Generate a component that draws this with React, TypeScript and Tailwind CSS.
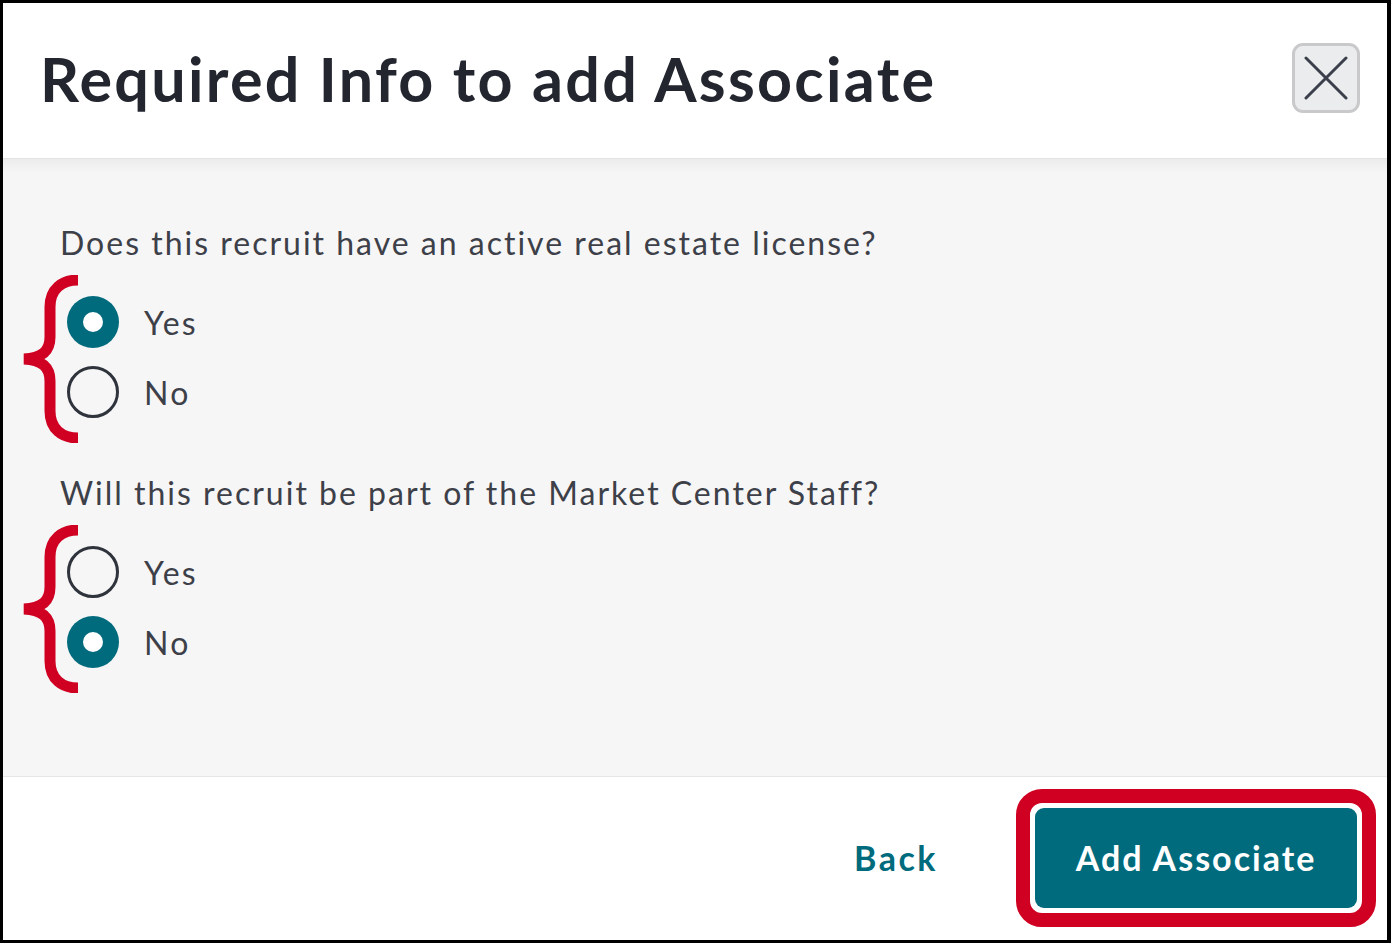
import React from "react";

const Brace = () => (
  <svg
    className="absolute left-[19px] top-[-21px]"
    width="60"
    height="168"
    viewBox="0 0 60 168"
    fill="none"
  >
    <path
      d="M56 5 C40 5 28 14 28 32 L28 62 C28 76 20 83 2 84 C20 85 28 92 28 106 L28 136 C28 154 40 163 56 163"
      stroke="#cf0022"
      strokeWidth="11"
    />
  </svg>
);

const Radio = ({ checked, label }: { checked: boolean; label: string }) => (
  <div className="flex items-center h-[52px]">
    {checked ? (
      <div className="w-[52px] h-[52px] rounded-full bg-[#006b7d] flex items-center justify-center">
        <div className="w-[20px] h-[20px] rounded-full bg-white" />
      </div>
    ) : (
      <div className="w-[52px] h-[52px] rounded-full border-[3px] border-[#2f333c] bg-transparent" />
    )}
    <span className="ml-[25px] mt-[2px] text-[32px] text-[#3d4048] leading-none tracking-[2.2px]">{label}</span>
  </div>
);

const Group = ({ yes }: { yes: boolean }) => (
  <div className="relative pl-[64px] flex flex-col gap-[18px]">
    <Brace />
    <Radio checked={yes} label="Yes" />
    <Radio checked={!yes} label="No" />
  </div>
);

export default function App() {
  return (
    <div
      className="w-full h-[943px] border-[3px] border-r-4 border-black flex flex-col bg-white overflow-hidden"
      style={{ fontFamily: "Lato, 'Noto Sans', sans-serif" }}
    >
      <div className="h-[156px] shrink-0 flex items-center justify-between pl-[37px] pr-[27px] border-b border-[#e3e3e3]">
        <h1 className="text-[61px] font-bold text-[#23262f] leading-none tracking-[2.3px] mt-[-4px]">
          Required Info to add Associate
        </h1>
        <button className="w-[68px] h-[70px] rounded-[11px] border-[3px] border-[#c9c9cb] bg-[#ebecee] flex items-center justify-center mt-[-6px]">
          <svg width="44" height="44" viewBox="0 0 44 44">
            <path d="M2 2 L42 42 M42 2 L2 42" stroke="#3b3f4a" strokeWidth="3" strokeLinecap="round" />
          </svg>
        </button>
      </div>
      <div className="flex-1 bg-[#f6f6f6] bg-[linear-gradient(to_bottom,#ececec,#f6f6f6_14px)] pt-[64px]">
        <p className="pl-[57px] text-[32px] leading-[40px] text-[#3d4048] tracking-[2px]">
          Does this recruit have an active real estate license?
        </p>
        <div className="mt-[33px]">
          <Group yes={true} />
        </div>
        <p className="pl-[57px] mt-[55px] text-[32px] leading-[40px] text-[#3d4048] tracking-[2px]">
          Will this recruit be part of the Market Center Staff?
        </p>
        <div className="mt-[33px]">
          <Group yes={false} />
        </div>
      </div>
      <div className="h-[164px] shrink-0 border-t border-[#e6e6e6] bg-white flex items-center justify-end pr-[11px]">
        <button className="text-[34px] font-bold text-[#006b7d] mr-[78px] leading-none tracking-[2.5px] mt-[-2px]">Back</button>
        <div className="rounded-[26px] border-[14px] border-[#cf0022] p-[5px] mt-[-2px]">
          <button className="w-[322px] h-[100px] rounded-[9px] bg-[#006b7d] text-white text-[34px] font-bold leading-none tracking-[2px]">
            Add Associate
          </button>
        </div>
      </div>
    </div>
  );
}
